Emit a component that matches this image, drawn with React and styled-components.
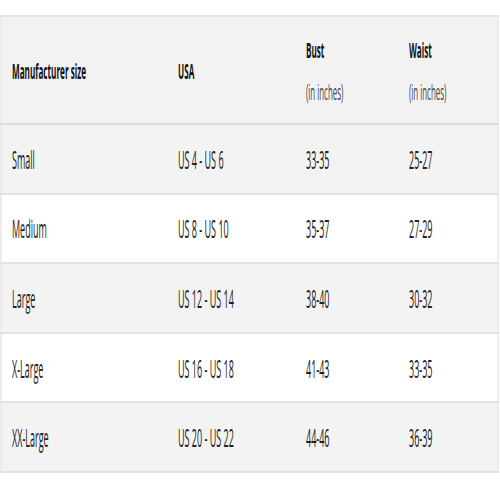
import React from "react";
import styled, { createGlobalStyle } from "styled-components";

const Global = createGlobalStyle`
  html, body { margin: 0; padding: 0; background: #fff; }
  body { font-family: "Open Sans", "Liberation Sans", sans-serif; }
`;

const Page = styled.div`
  width: 500px;
  height: 500px;
  padding-top: 15px;
  box-sizing: border-box;
  background: #fff;
`;

const Table = styled.table`
  width: 497px;
  border-collapse: collapse;
  table-layout: fixed;
  border-left: 2px solid #ececec;
  border-right: 2px solid #ececec;
`;

const Col = styled.col`
  width: ${(p) => p.$w}px;
`;

const HeadRow = styled.tr`
  background: #f2f2f2;
  border-top: 2px solid #e4e4e4;
  border-bottom: 2px solid #dcdcdc;
  height: 108px;
`;

const Row = styled.tr`
  background: ${(p) => (p.$shade ? "#f3f3f3" : "#ffffff")};
  border-bottom: 2px solid #e2e2e2;
  height: 69.6px;
`;

const Th = styled.th`
  text-align: left;
  vertical-align: middle;
  padding: 0 0 0 ${(p) => p.$pad}px;
  font-weight: normal;
  white-space: nowrap;
`;

const Td = styled.td`
  padding: 0 0 0 ${(p) => p.$pad}px;
  vertical-align: middle;
  white-space: nowrap;
`;

const Squeeze = styled.span`
  display: block;
  transform: scaleX(${(p) => p.$sx || 0.36});
  transform-origin: left center;
  white-space: nowrap;
`;

const HeadLabel = styled(Squeeze)`
  font-size: 22px;
  font-weight: 700;
  color: #111;
  line-height: 42px;
`;

const HeadNote = styled(Squeeze)`
  font-size: 22px;
  font-weight: 400;
  color: #444;
  line-height: 42px;
`;

const CellText = styled(Squeeze)`
  font-size: 25px;
  color: #222;
  line-height: 30px;
`;

const pads = [10, 10, 10, 10];
const widths = [167, 128, 103, 99];

const rows = [
  ["Small", "US 4 - US 6", "33-35", "25-27"],
  ["Medium", "US 8 - US 10", "35-37", "27-29"],
  ["Large", "US 12 - US 14", "38-40", "30-32"],
  ["X-Large", "US 16 - US 18", "41-43", "33-35"],
  ["XX-Large", "US 20 - US 22", "44-46", "36-39"],
];

export default function App() {
  return (
    <Page>
      <Global />
      <Table>
        <colgroup>
          {widths.map((w, i) => (
            <Col key={i} $w={w} />
          ))}
        </colgroup>
        <thead>
          <HeadRow>
            <Th $pad={pads[0]}>
              <HeadLabel $sx={0.37}>Manufacturer size</HeadLabel>
            </Th>
            <Th $pad={pads[1]}>
              <HeadLabel $sx={0.37}>USA</HeadLabel>
            </Th>
            <Th $pad={pads[2]}>
              <HeadLabel $sx={0.37}>Bust</HeadLabel>
              <HeadNote>(in inches)</HeadNote>
            </Th>
            <Th $pad={pads[3]}>
              <HeadLabel $sx={0.37}>Waist</HeadLabel>
              <HeadNote>(in inches)</HeadNote>
            </Th>
          </HeadRow>
        </thead>
        <tbody>
          {rows.map((r, i) => (
            <Row key={r[0]} $shade={i % 2 === 0}>
              {r.map((c, j) => (
                <Td key={j} $pad={pads[j]}>
                  <CellText>{c}</CellText>
                </Td>
              ))}
            </Row>
          ))}
        </tbody>
      </Table>
    </Page>
  );
}
